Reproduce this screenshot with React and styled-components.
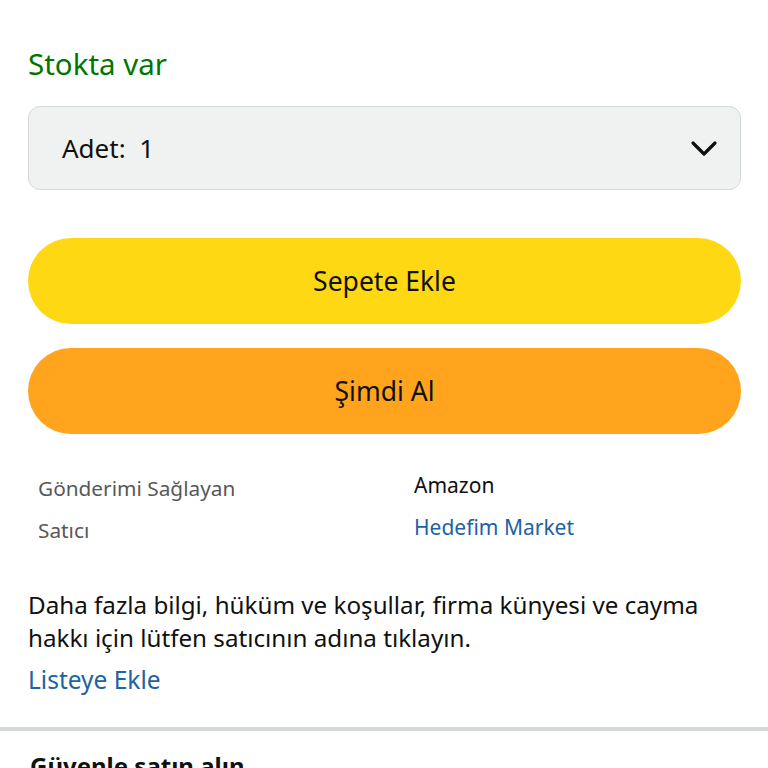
import styled, { createGlobalStyle } from "styled-components";

const GlobalStyle = createGlobalStyle`
  body {
    margin: 0;
    background: #ffffff;
    font-family: "Noto Sans", "Open Sans", sans-serif;
    color: #0f1111;
  }
`;

const Page = styled.div`
  width: 768px;
  height: 768px;
  overflow: hidden;
  display: flex;
  flex-direction: column;
  & > * {
    flex-shrink: 0;
  }
`;

const Section = styled.div`
  display: flex;
  flex-direction: column;
  padding: 44px 27px 0 28px;
`;

const Stock = styled.div`
  color: #007600;
  font-size: 29.5px;
  line-height: 40px;
`;

const Select = styled.div`
  margin-top: 22px;
  height: 84px;
  box-sizing: border-box;
  border: 1px solid #d5d9d9;
  border-radius: 12px;
  background: #f0f2f2;
  display: flex;
  align-items: center;
  justify-content: space-between;
  padding: 0 22px 0 33px;
  font-size: 26px;
  & svg {
    display: block;
  }
`;

const Button = styled.div`
  height: 86px;
  margin-top: ${(p) => p.$gap}px;
  border-radius: 43px;
  background: ${(p) => p.$bg};
  display: flex;
  align-items: center;
  justify-content: center;
  font-size: 26.5px;
  color: #0f1111;
`;

const InfoTable = styled.div`
  margin-top: 33px;
  display: grid;
  grid-template-columns: 376px 1fr;
  padding-left: 10px;
`;

const Label = styled.div`
  color: #565959;
  font-size: 20.8px;
  line-height: 42px;
`;

const Value = styled.div`
  font-size: 21px;
  line-height: 42px;
  margin-top: -3px;
  color: ${(p) => (p.$link ? "#2162a1" : "#0f1111")};
`;

const Note = styled.p`
  margin: 37px 0 0;
  font-size: 24.2px;
  line-height: 33px;
`;

const ListLink = styled.div`
  color: #2162a1;
  font-size: 24.5px;
  line-height: 38px;
  margin-top: 7px;
`;

const Divider = styled.div`
  margin-top: 28px;
  height: 4px;
  background: #d5d9d9;
`;

const SafeTitle = styled.div`
  padding: 18px 30px 0;
  font-size: 24px;
  font-weight: 700;
`;

const Chevron = () => (
  <svg width="28" height="18" viewBox="0 0 28 18">
    <path
      d="M3 4 L14 15 L25 4"
      fill="none"
      stroke="#0f1111"
      strokeWidth="3.2"
      strokeLinecap="round"
      strokeLinejoin="round"
    />
  </svg>
);

export default function App() {
  return (
    <Page>
      <GlobalStyle />
      <Section>
        <Stock>Stokta var</Stock>
        <Select>
          <span>Adet:&nbsp; 1</span>
          <Chevron />
        </Select>
        <Button $bg="#ffd814" $gap={48}>Sepete Ekle</Button>
        <Button $bg="#ffa41c" $gap={24}>Şimdi Al</Button>
        <InfoTable>
          <Label>Gönderimi Sağlayan</Label>
          <Value>Amazon</Value>
          <Label>Satıcı</Label>
          <Value $link>Hedefim Market</Value>
        </InfoTable>
        <Note>
          Daha fazla bilgi, hüküm ve koşullar, firma künyesi ve cayma
          <br />
          hakkı için lütfen satıcının adına tıklayın.
        </Note>
        <ListLink>Listeye Ekle</ListLink>
      </Section>
      <Divider />
      <SafeTitle>Güvenle satın alın</SafeTitle>
    </Page>
  );
}
